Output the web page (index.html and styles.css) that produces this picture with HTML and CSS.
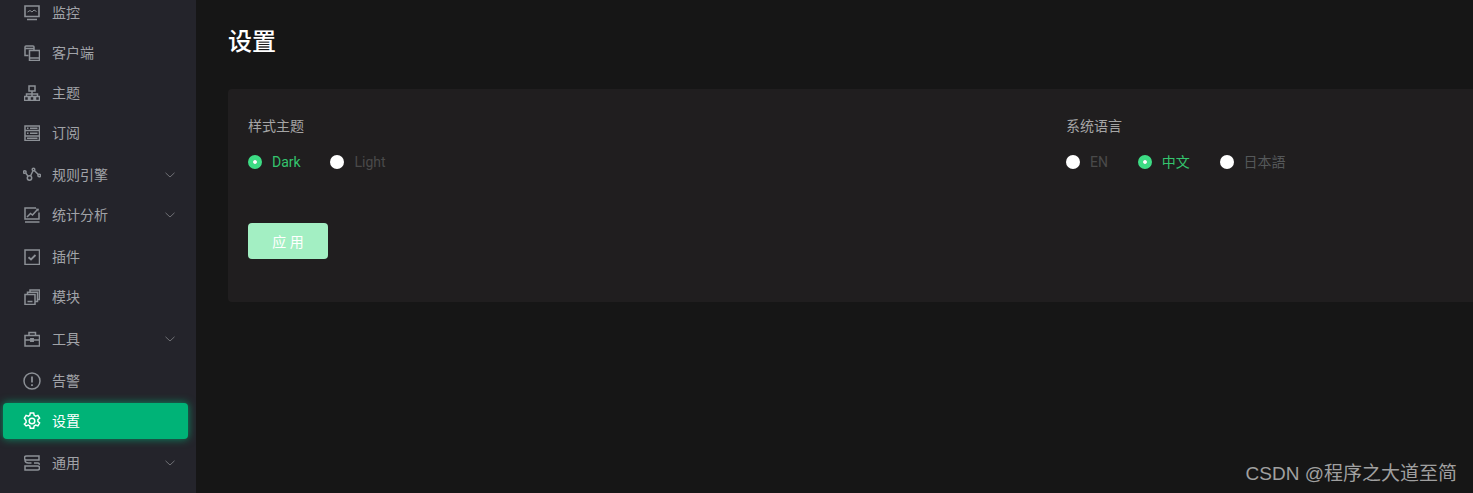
FILE: index.html
```html
<!DOCTYPE html>
<html lang="zh-CN">
<head>
    <meta charset="UTF-8">
    <title>设置</title>
    <link rel="stylesheet" href="styles.css">
</head>
<body>
    <aside class="sidebar">
        <nav class="menu">
            <a class="menu-item">
                <svg class="menu-icon" viewBox="0 0 16 16"><path d="M1 1h14v10.500H1zM3 14.500h10" stroke-width="1.600"/><path d="M3.500 7l2.500-1.500 2 1.500 2-2 2.500 1.500" stroke-width="1"/></svg>
                <span>监控</span>
            </a>
            <a class="menu-item">
                <svg class="menu-icon" viewBox="0 0 16 16"><path d="M4.500 10.500H1v-8.500a1 1 0 0 1 1-1h7a1 1 0 0 1 1 1V5M1 3.500h9"/><path d="M5.500 5.500h10v10h-10zM5.500 13h10"/></svg>
                <span>客户端</span>
            </a>
            <a class="menu-item">
                <svg class="menu-icon" viewBox="0 0 16 16"><path d="M5 1h6v5H5zM8 6v3M2.500 11.500V9h11v2.500M8 9v2.500M.5 11.500h4v4h-4zM6 11.500h4v4H6zM11.500 11.500h4v4h-4z"/></svg>
                <span>主题</span>
            </a>
            <a class="menu-item">
                <svg class="menu-icon" viewBox="0 0 16 16"><path d="M1 1h14.500v14.500H1zM1 5.500h14.500M1 11h14.500M3 3.300h1.500M6 3.300h7.500M3 8.200h1.500M6 8.200h7.500M3 13.200h10.500"/></svg>
                <span>订阅</span>
            </a>
            <a class="menu-item menu-sub">
                <svg class="menu-icon menu-icon-wide" viewBox="0 0 18 16"><circle cx="1.800" cy="5" r="1.300"/><circle cx="6.500" cy="11" r="2.200"/><circle cx="10.500" cy="2.500" r="1.300"/><circle cx="16.200" cy="8.500" r="1.300"/><path d="M2.800 6.200l2.400 3.200M7.500 9l2.500-5.200M11.500 3.800l3.800 3.700" stroke-width="1.500"/></svg>
                <span>规则引擎</span>
                <svg class="chevron" viewBox="0 0 10 6"><path d="M.5 .8L5 5l4.500-4.200"/></svg>
            </a>
            <a class="menu-item menu-sub">
                <svg class="menu-icon" viewBox="0 0 16 16"><path d="M15 5.500V12H1V1h11M1 15h14.500"/><path d="M3 10l3.500-3.500 2 1.500 4.500-5" stroke-width="1.500"/><path d="M11.500 1.500l3.500.3-.8 3z" fill="currentColor" stroke="none"/></svg>
                <span>统计分析</span>
                <svg class="chevron" viewBox="0 0 10 6"><path d="M.5 .8L5 5l4.500-4.200"/></svg>
            </a>
            <a class="menu-item">
                <svg class="menu-icon" viewBox="0 0 16 16"><path d="M1 1h14.500v14.500H1z"/><path d="M4.500 8.300l2.500 2.200 4.500-4.500" stroke-width="1.800"/></svg>
                <span>插件</span>
            </a>
            <a class="menu-item">
                <svg class="menu-icon" viewBox="0 0 16 16"><path d="M1 5.500h10v10H1zM3.500 5.500V3.200h10v9.300H11M6 3.200V1h9.500v9.500h-2M3.500 12.500h5"/></svg>
                <span>模块</span>
            </a>
            <a class="menu-item menu-sub">
                <svg class="menu-icon" viewBox="0 0 16 16"><path d="M1 4.500h14.500V15H1zM5 4.500V1.500h6.500v3M1 9h5.500M9.500 9h6"/><path d="M6.800 7.800h2.400v2.400H6.800z" fill="currentColor"/></svg>
                <span>工具</span>
                <svg class="chevron" viewBox="0 0 10 6"><path d="M.5 .8L5 5l4.500-4.200"/></svg>
            </a>
            <a class="menu-item">
                <svg class="menu-icon menu-icon-wide" viewBox="0 0 18 18"><circle cx="9" cy="9" r="8"/><path d="M9 4.500v6M9 12.300v1.700" stroke-width="1.800"/></svg>
                <span>告警</span>
            </a>
            <a class="menu-item active">
                <svg class="menu-icon menu-icon-wide" viewBox="0 0 18 18"><path d="M7.300 1h3.400l.5 2.300 1.500.8 2.200-.8 1.700 2.900-1.700 1.500v1.800l1.700 1.500-1.700 2.900-2.200-.8-1.500.8-.5 2.300H7.300l-.5-2.300-1.500-.8-2.200.8L1.400 12l1.700-1.500V8.700L1.400 6.200l1.700-2.900 2.200.8 1.500-.8z" stroke-width="1.500"/><circle cx="9" cy="9" r="2.800" stroke-width="1.500"/></svg>
                <span>设置</span>
            </a>
            <a class="menu-item menu-sub">
                <svg class="menu-icon" viewBox="0 0 16 16"><path d="M2.500 1h12.500v4H2.500a2 2 0 0 1 0-4zM1 5c0 2 1.500 3 3.500 3h3M10 8h3.500a2 2 0 0 1 2 1.800M1 11h12.500a2 2 0 0 1 0 4H1z"/></svg>
                <span>通用</span>
                <svg class="chevron" viewBox="0 0 10 6"><path d="M.5 .8L5 5l4.500-4.200"/></svg>
            </a>
        </nav>
    </aside>
    <main class="content">
        <h1 class="page-title">设置</h1>
        <section class="card">
            <div class="settings">
                <div class="field">
                    <div class="field-label">样式主题</div>
                    <div class="radio-group">
                        <label class="radio checked"><i class="radio-dot"></i>Dark</label>
                        <label class="radio"><i class="radio-dot"></i>Light</label>
                    </div>
                </div>
                <div class="field">
                    <div class="field-label">系统语言</div>
                    <div class="radio-group">
                        <label class="radio"><i class="radio-dot"></i>EN</label>
                        <label class="radio checked"><i class="radio-dot"></i><span class="radio-cjk">中文</span></label>
                        <label class="radio muted"><i class="radio-dot"></i><span class="radio-cjk">日本語</span></label>
                    </div>
                </div>
            </div>
            <button class="apply-btn">应 用</button>
        </section>
    </main>
    <div class="watermark">CSDN @程序之大道至简</div>
</body>
</html>
```

FILE: styles.css
```css
html, body {
    margin: 0;
    padding: 0;
    height: 100%;
    overflow: hidden;
}
body {
    display: flex;
    background: #161616;
    font-family: Roboto, "Noto Sans CJK SC", sans-serif;
    font-size: 14px;
    color: #a5a5a5;
    position: relative;
}
.sidebar {
    width: 196px;
    flex-shrink: 0;
    background: #24242b;
    overflow: hidden;
}
.menu {
    margin-top: -5px;
    padding: 0 8px 0 3px;
}
.menu-item {
    display: flex;
    align-items: center;
    height: 36px;
    margin-top: 4px;
    padding: 0 13px 0 21px;
    border-radius: 4px;
    color: #a1a3a8;
}
.menu-item:first-child {
    margin-top: 0;
}
.menu-item + .menu-sub,
.menu-sub + .menu-item {
    margin-top: 6px;
}
.menu-sub + .menu-sub {
    margin-top: 4px;
}
.menu-item span {
    margin-left: 12px;
    padding-bottom: 2px;
    flex: 1;
}
.menu-icon {
    width: 16px;
    height: 16px;
    flex-shrink: 0;
    fill: none;
    stroke: #8c9096;
    stroke-width: 1.500;
    color: #8c9096;
}
.menu-icon-wide {
    width: 18px;
    height: 18px;
    margin: 0 -1px;
}
.chevron {
    width: 10px;
    height: 6px;
    fill: none;
    stroke: #6f7075;
    stroke-width: 1;
}
.menu-item.active {
    background: #00b377;
    color: #fff;
    box-shadow: 0 0 8px rgba(0, 190, 125, 0.7);
}
.active .menu-icon {
    stroke: #fff;
}
.content {
    flex: 1;
    min-width: 0;
    padding: 0 0 0 32px;
}
.page-title {
    margin: 25px 0 30px;
    font-size: 24px;
    line-height: 34px;
    font-weight: 500;
    color: #fff;
}
.card {
    background: #201e1f;
    border-radius: 4px 0 0 4px;
    padding: 27px 20px 43px;
}
.settings {
    display: grid;
    grid-template-columns: 818px 1fr;
}
.field-label {
    line-height: 20px;
    color: #a5a5a5;
    margin-bottom: 16px;
}
.radio-group {
    display: flex;
    gap: 29.8px;
    height: 20px;
}
.radio {
    display: flex;
    align-items: center;
    color: #4a4a4a;
}
.radio.checked {
    color: #34c46e;
}
.radio.muted {
    color: #55585a;
}
.radio-cjk {
    padding-bottom: 2px;
}
.radio-dot {
    width: 14px;
    height: 14px;
    border-radius: 50%;
    background: #fff;
    margin-right: 10px;
    box-sizing: border-box;
}
.checked .radio-dot {
    background: #3ddc84;
    border: 5px solid #3ddc84;
    background-clip: padding-box;
}
.checked .radio-dot::after {
    content: "";
    display: block;
    width: 4px;
    height: 4px;
    border-radius: 50%;
    background: #fff;
}
.apply-btn {
    display: block;
    width: 80px;
    height: 36px;
    margin-top: 51px;
    border: none;
    border-radius: 4px;
    background: #a3efc3;
    color: #fff;
    font-family: inherit;
    font-size: 14px;
}
.watermark {
    position: absolute;
    right: 16px;
    bottom: 7px;
    font-family: "Liberation Sans", "Noto Sans CJK SC", sans-serif;
    font-size: 19px;
    line-height: 24px;
    color: #a0a0a0;
}
```
